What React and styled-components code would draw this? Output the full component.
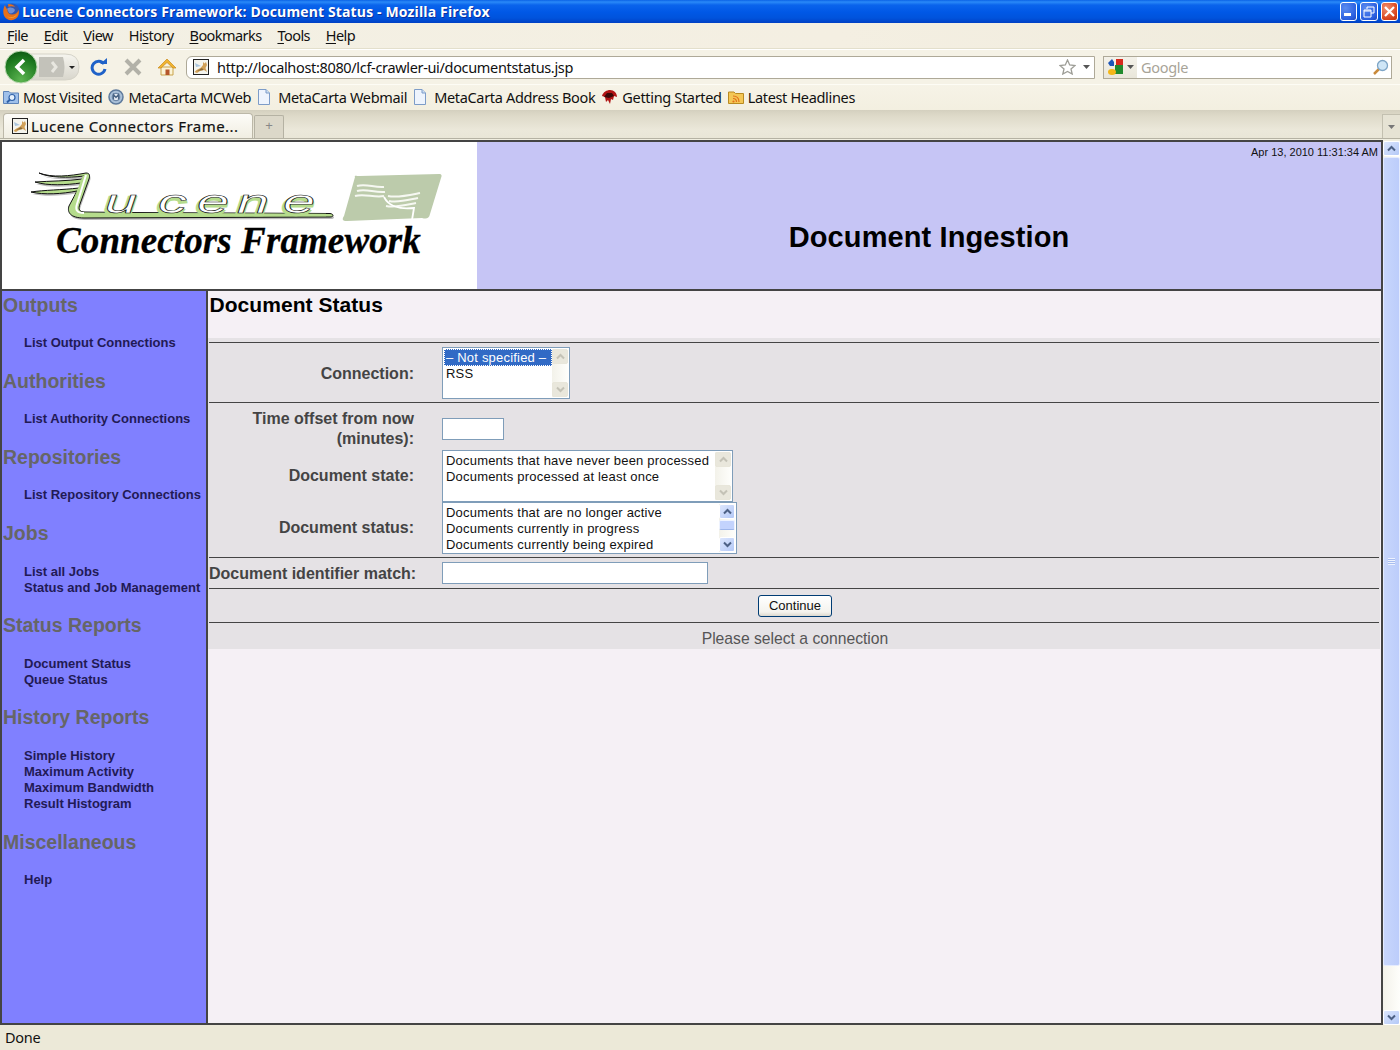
import React from "react";
import styled, { createGlobalStyle } from "styled-components";

const GlobalStyle = createGlobalStyle`
  html, body {
    margin: 0;
    padding: 0;
    height: 1050px;
    overflow: hidden;
    background: #ece9d8;
    font-family: "Liberation Sans", Arial, sans-serif;
  }
`;

const Window = styled.div`
  width: 1400px;
  height: 1050px;
  display: flex;
  flex-direction: column;
  overflow: hidden;
`;

// Browser chrome
const TitleBar = styled.div`
  height: 23px;
  flex: none;
  display: flex;
  align-items: center;
  padding: 0 2px 0 2px;
  background: linear-gradient(#0b63e6 0, #2a8af8 2px, #0a64ec 5px, #0058e6 12px, #0053dc 18px, #0040c4 23px);
`;

const TitleText = styled.div`
  flex: 1;
  margin-left: 2px;
  color: #fff;
  font: bold 14px "Open Sans", sans-serif;
  letter-spacing: 0.13px;
  text-shadow: 1px 1px 0 #0a2f9c;
  white-space: nowrap;
`;

const WinButtons = styled.div`
  display: flex;
  gap: 3px;
`;

const WinButton = styled.div`
  width: 15.5px;
  height: 17px;
  border: 1px solid #fff;
  border-radius: 3px;
  background: ${(p) =>
    p.$close
      ? "radial-gradient(circle at 30% 30%, #f09070, #d8431c 70%, #b83210)"
      : "radial-gradient(circle at 30% 30%, #5a8cf0, #2a5fe0 70%, #1c46c0)"};
  display: flex;
  align-items: center;
  justify-content: center;
`;

const MenuBar = styled.div`
  height: 26px;
  flex: none;
  display: flex;
  align-items: center;
  gap: 15.8px;
  padding: 0 7px 1px;
  box-sizing: border-box;
  background: linear-gradient(90deg, #f3f0e4, #f4efe2 60%, #efebdc);
  border-bottom: 1px solid #e3dfcc;
  font: 14.5px "Noto Sans", sans-serif;
  letter-spacing: -0.55px;
  color: #111;
`;

const MenuItem = styled.span`
  & u {
    text-underline-offset: 2px;
  }
`;

const NavBar = styled.div`
  height: 36px;
  flex: none;
  display: flex;
  align-items: center;
  box-sizing: border-box;
  padding-left: 3px;
  background: #f5f2e6;
  border-top: 1px solid #fff;
  border-bottom: 1px solid #fdfcf5;
`;

const BackForward = styled.div`
  position: relative;
  width: 78px;
  height: 30px;
  margin-right: 9px;
`;

const UrlBar = styled.div`
  width: 909px;
  height: 23px;
  margin-left: 9px;
  box-sizing: border-box;
  display: flex;
  align-items: center;
  background: #fff;
  border: 1px solid #aea998;
  border-radius: 6px 0 0 6px;
  padding: 0 4px 0 6px;
`;

const SiteIcon = styled.span`
  width: 16px;
  height: 16px;
  flex: none;
  display: flex;
`;

const UrlText = styled.div`
  flex: 1;
  margin-left: 8px;
  font: 14.5px "Noto Sans", sans-serif;
  letter-spacing: -0.335px;
  color: #111;
  white-space: nowrap;
`;

const SearchBar = styled.div`
  width: 289px;
  height: 23px;
  margin-left: 8px;
  box-sizing: border-box;
  display: flex;
  align-items: center;
  background: #fff;
  border: 1px solid #aea998;
  padding-right: 2px;
`;

const EngineBox = styled.div`
  width: 33px;
  height: 21px;
  flex: none;
  display: flex;
  align-items: center;
  padding-left: 3px;
  box-sizing: border-box;
  gap: 2px;
  background: linear-gradient(#f4f2ea, #e9e6da);
`;

const SearchHint = styled.div`
  flex: 1;
  margin-left: 4px;
  font: 14.5px "Noto Sans", sans-serif;
  letter-spacing: -0.3px;
  color: #a8a498;
`;

const Bookmarks = styled.div`
  height: 25px;
  flex: none;
  box-sizing: border-box;
  display: flex;
  align-items: center;
  padding: 0 0 2px 3px;
  gap: 6px;
  background: linear-gradient(#f6f3e7, #f3efe0);
  font: 14.5px "Noto Sans", sans-serif;
  letter-spacing: -0.33px;
  color: #111;
`;

const Bookmark = styled.div`
  display: flex;
  align-items: center;
  gap: 4px;
  white-space: nowrap;
`;

const TabStrip = styled.div`
  height: 29px;
  flex: none;
  box-sizing: border-box;
  display: flex;
  align-items: flex-end;
  padding-left: 3px;
  background: linear-gradient(#d4d0bf, #dedac9 6px, #ebe8da 20px, #e9e6d7);
  border-bottom: 1px solid #b5b2a3;
`;

const Tab = styled.div`
  width: 250px;
  height: 25px;
  box-sizing: border-box;
  display: flex;
  align-items: center;
  gap: 3px;
  padding-left: 8px;
  background: linear-gradient(#fdfcf8, #f1eee2);
  border: 1px solid #bcb8a8;
  border-bottom: 0;
  border-radius: 4px 4px 0 0;
  font: 15px "Noto Sans", sans-serif;
  letter-spacing: 0.46px;
  -webkit-text-stroke: 0.2px #111;
  color: #111;
  white-space: nowrap;
`;

const NewTab = styled.div`
  width: 30px;
  height: 23px;
  margin-left: 1px;
  box-sizing: border-box;
  background: #dcd8c9;
  border: 1px solid #b5b2a3;
  border-bottom: 0;
  border-radius: 2px 2px 0 0;
  color: #888;
  font-size: 13px;
  text-align: center;
  line-height: 20px;
`;

const TabMenu = styled.div`
  width: 18px;
  height: 24px;
  margin-left: auto;
  box-sizing: border-box;
  background: #e6e3d4;
  border: 1px solid #c3c0b0;
  border-right: 0;
  border-bottom: 0;
  display: flex;
  align-items: center;
  justify-content: center;
`;

// Page
const Viewport = styled.div`
  flex: 1;
  min-height: 0;
  display: flex;
  background: #f0eee0;
`;

const Page = styled.div`
  flex: 1;
  display: flex;
  flex-direction: column;
  border: 2px solid #444;
  margin-top: 1px;
`;

const Header = styled.div`
  height: 147px;
  flex: none;
  display: flex;
  background: #c6c5f5;
  border-bottom: 2px solid #444;
`;

const LogoBox = styled.div`
  width: 475px;
  flex: none;
  background: #fff;
  display: flex;
  flex-direction: column;
  align-items: flex-start;
`;

const LogoTagline = styled.div`
  margin: -15px 0 0 54px;
  font: italic bold 37px "Liberation Serif", serif;
  letter-spacing: 0.1px;
  -webkit-text-stroke: 0.3px #000;
  color: #000;
  white-space: nowrap;
`;

const Banner = styled.div`
  flex: 1;
  display: flex;
  flex-direction: column;
`;

const DateStamp = styled.div`
  margin: 4px 3px 0 0;
  text-align: right;
  font-size: 11px;
  line-height: 13px;
  color: #111;
`;

const BannerTitle = styled.div`
  margin-top: 60px;
  text-align: center;
  font-size: 29px;
  font-weight: bold;
  line-height: 36px;
  letter-spacing: 0.1px;
  color: #000;
`;

const Body = styled.div`
  flex: 1;
  min-height: 0;
  display: flex;
`;

const Sidebar = styled.div`
  width: 204px;
  flex: none;
  padding-top: 1.5px;
  background: #8080ff;
  border-right: 2px solid #444;
  overflow: hidden;
`;

const NavSection = styled.div`
  margin-bottom: 17.7px;
`;

const NavHeading = styled.div`
  padding-left: 1px;
  font-size: 19.5px;
  font-weight: bold;
  line-height: 24px;
  color: #666;
`;

const NavList = styled.div`
  margin: 18.5px 0 0 22px;
`;

const NavLink = styled.div`
  font-size: 13px;
  font-weight: bold;
  line-height: 16px;
  color: #221a55;
  white-space: nowrap;
`;

const Main = styled.div`
  flex: 1;
  min-width: 0;
  background: #f5f0f5;
`;

const PageTitle = styled.div`
  height: 47px;
  box-sizing: border-box;
  padding: 1px 0 0 1.5px;
  font-size: 21px;
  font-weight: bold;
  line-height: 25px;
  letter-spacing: 0.05px;
  color: #000;
`;

const FormPanel = styled.div`
  width: 1172px;
  padding: 4px 1px 0;
  box-sizing: border-box;
  background: #e5e2e5;
`;

const Rule = styled.div`
  height: 1px;
  background: #444;
`;

const Row = styled.div`
  display: flex;
  align-items: ${(p) => (p.$top ? "flex-start" : "center")};
  height: ${(p) => p.$h}px;
`;

const Label = styled.div`
  width: 205px;
  flex: none;
  box-sizing: border-box;
  padding-top: ${(p) => (p.$pad === undefined ? 2 : p.$pad)}px;
  text-align: right;
  font-size: 16px;
  font-weight: bold;
  line-height: 20px;
  color: #444;
  white-space: ${(p) => (p.$wrap ? "normal" : "nowrap")};
`;

const Field = styled.div`
  margin-left: 28px;
  margin-top: ${(p) => p.$top || 0}px;
  display: flex;
`;

const TextInput = styled.div`
  width: ${(p) => p.$w}px;
  height: 22px;
  box-sizing: border-box;
  background: #fff;
  border: 1px solid #7f9db9;
`;

const ListBox = styled.div`
  width: ${(p) => p.$w}px;
  height: 52px;
  box-sizing: border-box;
  display: flex;
  background: #fff;
  border: 1px solid #7f9db9;
  padding: 1px;
  font-size: 13px;
  line-height: 16px;
  letter-spacing: 0.2px;
  color: #111;
`;

const Options = styled.div`
  flex: 1;
  min-width: 0;
  padding-top: 1px;
`;

const Option = styled.div`
  padding-left: 2px;
  white-space: nowrap;
  ${(p) =>
    p.$selected &&
    `
    margin-top: -1px;
    padding-top: 1px;
    background: #316ac5;
    color: #fff;
    outline: 1px dotted #fff;
    outline-offset: -1px;
  `}
`;

const ListScroll = styled.div`
  width: 16px;
  flex: none;
  display: flex;
  flex-direction: column;
  justify-content: space-between;
  background: linear-gradient(90deg, #f3f2ea, #fefefb);
`;

const ScrollBtn = styled.div`
  width: ${(p) => (p.$wide ? 17 : 16)}px;
  height: 15px;
  box-sizing: border-box;
  display: flex;
  align-items: center;
  justify-content: center;
  border: 1px solid ${(p) => (p.$off ? "#e8e6da" : "#fff")};
  border-radius: 2px;
  background: ${(p) => (p.$off ? "#e9e7dc" : "linear-gradient(135deg, #dce6fd, #b4c9f7)")};
`;

const ListThumb = styled.div`
  height: 10px;
  margin-top: 1px;
  flex: none;
  box-sizing: border-box;
  background: #c3d3fd;
  border: 1px solid #eef3ff;
  border-bottom-color: #9db5ea;
  border-radius: 2px;
`;

const CenterRow = styled.div`
  display: flex;
  justify-content: center;
  align-items: center;
  box-sizing: border-box;
  padding: ${(p) => p.$pad || 0}px 0 0 2px;
  height: ${(p) => p.$h}px;
`;

const ContinueBtn = styled.div`
  width: 74px;
  height: 22px;
  box-sizing: border-box;
  border: 1px solid #003c74;
  border-radius: 3px;
  background: linear-gradient(#fff, #f4f3ee 80%, #dcd8ce);
  font-size: 13px;
  line-height: 20px;
  text-align: center;
  color: #111;
`;

const Message = styled.div`
  font-size: 15.7px;
  color: #555;
`;

const PageScroll = styled.div`
  width: 17px;
  flex: none;
  display: flex;
  flex-direction: column;
  margin-top: 2px;
  background: linear-gradient(90deg, #f3f2ea, #fefefb);
`;

const PageThumb = styled.div`
  height: 809px;
  margin-top: 1px;
  box-sizing: border-box;
  background: linear-gradient(90deg, #c8d6fc, #bccdfb);
  border: 1px solid #e4ebfe;
  border-radius: 2px;
  display: flex;
  align-items: center;
  justify-content: center;
`;

const Grip = styled.div`
  width: 7px;
  height: 7px;
  background: repeating-linear-gradient(#eef2fe 0 1px, #a8bdf0 1px 2px);
`;

const ScrollSpacer = styled.div`
  flex: 1;
`;

const StatusBar = styled.div`
  height: 25px;
  flex: none;
  box-sizing: border-box;
  padding: 2px 0 0 5px;
  background: #ece9d8;
  font: 14.5px "Noto Sans", sans-serif;
  letter-spacing: -0.3px;
  color: #111;
`;

const PanelGap = styled.div`
  height: 3px;
`;

const Chevron = ({ up, color = "#4d6185", w = 9 }) => (
  <svg width={w} height="7" viewBox="0 0 9 7">
    <path d={up ? "M1 5.5 L4.5 2 L8 5.5" : "M1 1.5 L4.5 5 L8 1.5"} fill="none" stroke={color} strokeWidth="2" />
  </svg>
);

const Firefox = () => (
  <svg width="18" height="18" viewBox="0 0 18 18">
    <circle cx="10" cy="8" r="7.5" fill="#2f56b0" />
    <path d="M5 6 C7 4 11 4 13 7 C12 10 9 11 7 10Z" fill="#6d8fd8" />
    <path d="M3 2 C0 7 1 14 5 16 C9 18.500 15 17 16.500 12 C17 10 17 8 16.500 7 C15.500 10 13 11.500 10 11.500 C7 11.500 5 9 5.500 6.500 C4.500 5.500 3.500 4 3 2Z" fill="#e8701a" />
    <path d="M4 12 C7 16 13 15 16 10 C14 15 8 17 4 12Z" fill="#fbc33a" />
    <path d="M6 1 C9 1 12 2 13 4 C11 3 8 3 6.500 4Z" fill="#e8701a" />
  </svg>
);

const Tomcat = ({ s = 16 }) => (
  <svg width={s} height={s} viewBox="0 0 16 16" style={{ flex: "none" }}>
    <rect x="0.500" y="0.500" width="15" height="15" fill="#f4f4ee" stroke="#222" />
    <path d="M1.500 13 C4 10 6 10 8 8.500 L10 6 L10 3 L11.500 4.500 L13 3 L14 6 L12.500 9 L14 13 L11 11 L7 12 L4 14Z" fill="#d1a159" />
    <path d="M4 12 L9 9 L10.500 11Z" fill="#8a6a3a" />
    <path d="M2 4 L8 7 L3 8Z" fill="#a9c4dd" />
  </svg>
);

const PageDoc = () => (
  <svg width="17" height="16" viewBox="0 0 17 16">
    <path d="M1.500 .5 H9 L12.500 4 V15.500 H1.500Z" fill="#eef4fd" stroke="#7d9cc8" />
    <path d="M9 .5 V4 H12.500" fill="#cfe0f5" stroke="#7d9cc8" />
  </svg>
);

const FolderSearch = () => (
  <svg width="16" height="16" viewBox="0 0 16 16">
    <path d="M.5 2.500 H6 L7.500 4 H15.500 V14.500 H.5Z" fill="#9fc0ea" stroke="#5d83b8" />
    <circle cx="9" cy="8.500" r="3" fill="#e6f1fc" stroke="#2f61a8" strokeWidth="1.200" />
    <path d="M7 10.500 L4 13.500" stroke="#2f61a8" strokeWidth="2" />
  </svg>
);

const GlobeIcon = () => (
  <svg width="16" height="16" viewBox="0 0 16 16">
    <circle cx="8" cy="8" r="7" fill="#a9c0d8" stroke="#5e7a9c" strokeWidth="1.500" />
    <circle cx="8" cy="8" r="3.800" fill="#e8eef5" stroke="#5e7a9c" />
    <path d="M5.500 10.500 V5.500 L8 8.500 L10.500 5.500 V10.500" fill="none" stroke="#4c6686" strokeWidth="1.200" />
  </svg>
);

const RedHat = () => (
  <svg width="17" height="16" viewBox="0 0 17 16">
    <path d="M1 7 C2 3 6 1 9 1 C13 1 16 4 16 8 L13 7 L12 11 L10 10 L9 15 L7 11 L5 13 L4 8 Z" fill="#b01414" />
    <path d="M3 8 L6 4 L11 4 L13 7 L8 9Z" fill="#3a0808" />
  </svg>
);

const RssIcon = () => (
  <svg width="16" height="16" viewBox="0 0 16 16">
    <path d="M.5 3 H6 L7.500 4.500 H15.500 V14.500 H.5Z" fill="#f4c755" stroke="#b98a20" />
    <path d="M5 7 C9 7 11 9 11 13 M5 9.500 C7.500 9.500 8.500 10.500 8.500 13" fill="none" stroke="#e2701a" strokeWidth="1.200" />
    <circle cx="5.500" cy="12.500" r="1.100" fill="#e2701a" />
  </svg>
);

const GoogleG = () => (
  <svg width="18" height="18" viewBox="0 0 18 18">
    <rect x="9" y="1" width="7" height="7" fill="#d62a1c" />
    <rect x="8" y="7" width="8" height="9" fill="#1f8a2c" />
    <path d="M1 5 L5 1 L7 4 L7 8 L3 8Z" fill="#1c55b8" />
    <ellipse cx="5" cy="14" rx="4" ry="3" fill="#f3b617" />
  </svg>
);

const Caret = ({ color = "#555" }) => (
  <svg width="7" height="4" viewBox="0 0 7 4" style={{ flex: "none" }}>
    <path d="M0 0 H7 L3.500 4Z" fill={color} />
  </svg>
);

const BackButtons = () => (
  <svg width="78" height="34" viewBox="0 0 78 34" style={{ position: "absolute", left: 0, top: -2 }}>
    <defs>
      <linearGradient id="bf" x1="0" x2="0" y1="0" y2="1">
        <stop offset="0" stopColor="#f6f5ef" />
        <stop offset="1" stopColor="#d8d6cc" />
      </linearGradient>
      <radialGradient id="grn" cx="0.5" cy="0.9" r="0.9">
        <stop offset="0" stopColor="#5cb451" />
        <stop offset="0.7" stopColor="#1d7a1f" />
        <stop offset="1" stopColor="#0e5a13" />
      </radialGradient>
    </defs>
    <path d="M18 4 H62 Q76 4 76 17 Q76 30 62 30 H18Z" fill="url(#bf)" stroke="#d5d3c8" />
    <path d="M36 7 H60 Q63 17 60 27 H36Z" fill="#c3c2ba" />
    <path d="M49 12 L53 17 L49 22" fill="none" stroke="#e8e7e0" strokeWidth="3" />
    <circle cx="18" cy="17" r="16" fill="url(#grn)" stroke="#b9d8b0" />
    <path d="M21 10 L14 17 L21 24" fill="none" stroke="#fff" strokeWidth="3.500" />
    <path d="M66 16 H72 L69 19Z" fill="#222" />
  </svg>
);

const Reload = () => (
  <svg width="18" height="18" viewBox="0 0 18 18" style={{ flex: "none" }}>
    <path d="M14 6 A6.500 6.500 0 1 0 15 11" fill="none" stroke="#1f62c8" strokeWidth="3" />
    <path d="M10 6 H17 V0Z" fill="#1f62c8" />
  </svg>
);

const StopX = () => (
  <svg width="18" height="18" viewBox="0 0 18 18" style={{ flex: "none", marginLeft: 16 }}>
    <path d="M2 2 L16 16 M16 2 L2 16" stroke="#b2b1a8" strokeWidth="4" />
  </svg>
);

const Home = () => (
  <svg width="20" height="18" viewBox="0 0 20 18" style={{ flex: "none", marginLeft: 15 }}>
    <path d="M4 9 H16 V17 H4Z" fill="#fbf3d6" stroke="#c9a24a" />
    <path d="M1 10 L10 1 L19 10 L16 10 L10 4.500 L4 10Z" fill="#f0b430" stroke="#c98a1c" strokeWidth=".7" />
    <rect x="8.500" y="11.500" width="4" height="5.500" fill="#b5562a" />
  </svg>
);

const Star = () => (
  <svg width="17" height="16" viewBox="0 0 17 16" style={{ flex: "none", marginRight: 7 }}>
    <path d="M8.500 1 L10.700 6 L16 6.500 L12 10 L13.200 15 L8.500 12.500 L3.800 15 L5 10 L1 6.500 L6.300 6Z" fill="#fff" stroke="#9d9d96" strokeWidth="1.300" />
  </svg>
);

const Magnifier = () => (
  <svg width="17" height="17" viewBox="0 0 17 17" style={{ flex: "none" }}>
    <path d="M7 10 L2 15" stroke="#c98a3c" strokeWidth="2.500" />
    <circle cx="10.500" cy="6.500" r="5" fill="#cfe6f7" stroke="#7ea5c6" strokeWidth="1.300" />
  </svg>
);

const LuceneLogo = () => (
  <svg width="475" height="92" viewBox="2 142 475 92" style={{ display: "block", flex: "none" }}>
    <defs>
      <path
        id="lucene-mark"
        d="M39 173 C52 178 70 176 86 173 C90 173 90 176 89 179 L80 204 C78 209 79 212 85 212 L125 212.500 L330 213.500 C334 214 334 217 330 217 L84 218 C70 218 67 212 69 206 L77 191 C62 194 44 195 31 192 C44 190 62 190 79 188 L81 183 C66 185 48 186 35 182 C50 181 68 181 82 179 L84 176 C68 178 50 178 39 173Z"
      />
    </defs>
    <use href="#lucene-mark" transform="translate(1 2)" fill="#bbb" />
    <use href="#lucene-mark" fill="#b5dc8c" stroke="#111" strokeWidth="1" />
    <path d="M84 176 L72 207 C71 212 75 214 84 214 L326 215" fill="none" stroke="#b5dc8c" strokeWidth="2.500" />
    <path d="M86 175 L77 204 C75 210 77 213 84 213" fill="none" stroke="#fff" strokeWidth="2" />
    <g fontFamily="'Liberation Sans', sans-serif" fontStyle="italic" fontSize="34" transform="scale(1.7 1)">
      <text x="61.200 92.300 115.300 138.800 165.900" y="215" fill="none" stroke="#b5dc8c" strokeWidth="3.500" vectorEffect="non-scaling-stroke">ucene</text>
      <text x="61.800 92.900 115.900 139.400 166.500" y="213" fill="#fff" stroke="#111" strokeWidth="0.800" vectorEffect="non-scaling-stroke">ucene</text>
    </g>
    <path d="M355 177 C354 175 356 176 360 176 L439 174 C442 174 442 176 441 178 L430 214 C429 219 426 219 422 218 L347 221 C342 221 342 219 344 216Z" fill="#bccbab" />
    <path d="M357 186 C366 183 374 188 384 187 M357 191 C366 188 374 193 385 192 M355 196 C364 193 374 198 384 196" stroke="#f6f8f2" strokeWidth="2" fill="none" />
    <path d="M388 196 C398 198 410 195 420 193 M389 201 C398 203 408 200 418 198 M386 206 C396 208 406 205 416 203" stroke="#f6f8f2" strokeWidth="2" fill="none" />
    <path d="M384 197 C388 205 398 210 414 208 L412 220" stroke="#fff" strokeWidth="1.800" fill="none" />
  </svg>
);

const menus = [
  ["", "F", "ile"],
  ["", "E", "dit"],
  ["", "V", "iew"],
  ["Hi", "s", "tory"],
  ["", "B", "ookmarks"],
  ["", "T", "ools"],
  ["", "H", "elp"],
];

const navSections = [
  { title: "Outputs", links: ["List Output Connections"] },
  { title: "Authorities", links: ["List Authority Connections"] },
  { title: "Repositories", links: ["List Repository Connections"] },
  { title: "Jobs", links: ["List all Jobs", "Status and Job Management"] },
  { title: "Status Reports", links: ["Document Status", "Queue Status"] },
  { title: "History Reports", links: ["Simple History", "Maximum Activity", "Maximum Bandwidth", "Result Histogram"] },
  { title: "Miscellaneous", links: ["Help"] },
];

const DisabledScroll = () => (
  <ListScroll>
    <ScrollBtn $off>
      <Chevron up color="#c4c2b6" />
    </ScrollBtn>
    <ScrollBtn $off>
      <Chevron color="#c4c2b6" />
    </ScrollBtn>
  </ListScroll>
);

const App = () => (
  <Window>
    <GlobalStyle />
    <TitleBar>
      <Firefox />
      <TitleText>Lucene Connectors Framework: Document Status - Mozilla Firefox</TitleText>
      <WinButtons>
        <WinButton>
          <svg width="11" height="11" viewBox="0 0 11 11">
            <rect x="1" y="7" width="7" height="3" fill="#fff" />
          </svg>
        </WinButton>
        <WinButton>
          <svg width="12" height="12" viewBox="0 0 12 12">
            <path d="M4 3 V1 H11 V7 H8 M1 4 H8 V11 H1Z M1 5 H8" fill="none" stroke="#fff" />
          </svg>
        </WinButton>
        <WinButton $close>
          <svg width="11" height="11" viewBox="0 0 11 11">
            <path d="M1 1 L10 10 M10 1 L1 10" stroke="#fff" strokeWidth="2.200" />
          </svg>
        </WinButton>
      </WinButtons>
    </TitleBar>

    <MenuBar>
      {menus.map(([before, key, after]) => (
        <MenuItem key={key}>
          {before}
          <u>{key}</u>
          {after}
        </MenuItem>
      ))}
    </MenuBar>

    <NavBar>
      <BackForward>
        <BackButtons />
      </BackForward>
      <Reload />
      <StopX />
      <Home />
      <UrlBar>
        <SiteIcon>
          <Tomcat />
        </SiteIcon>
        <UrlText>http://localhost:8080/lcf-crawler-ui/documentstatus.jsp</UrlText>
        <Star />
        <Caret />
      </UrlBar>
      <SearchBar>
        <EngineBox>
          <GoogleG />
          <Caret />
        </EngineBox>
        <SearchHint>Google</SearchHint>
        <Magnifier />
      </SearchBar>
    </NavBar>

    <Bookmarks>
      <Bookmark>
        <FolderSearch />
        Most Visited
      </Bookmark>
      <Bookmark>
        <GlobeIcon />
        MetaCarta MCWeb
      </Bookmark>
      <Bookmark>
        <PageDoc />
        MetaCarta Webmail
      </Bookmark>
      <Bookmark>
        <PageDoc />
        MetaCarta Address Book
      </Bookmark>
      <Bookmark>
        <RedHat />
        Getting Started
      </Bookmark>
      <Bookmark>
        <RssIcon />
        Latest Headlines
      </Bookmark>
    </Bookmarks>

    <TabStrip>
      <Tab>
        <Tomcat />
        Lucene Connectors Frame...
      </Tab>
      <NewTab>+</NewTab>
      <TabMenu>
        <Caret color="#777" />
      </TabMenu>
    </TabStrip>

    <Viewport>
      <Page>
        <Header>
          <LogoBox>
            <LuceneLogo />
            <LogoTagline>Connectors Framework</LogoTagline>
          </LogoBox>
          <Banner>
            <DateStamp>Apr 13, 2010 11:31:34 AM</DateStamp>
            <BannerTitle>Document Ingestion</BannerTitle>
          </Banner>
        </Header>
        <Body>
          <Sidebar>
            {navSections.map((section) => (
              <NavSection key={section.title}>
                <NavHeading>{section.title}</NavHeading>
                <NavList>
                  {section.links.map((link) => (
                    <NavLink key={link}>{link}</NavLink>
                  ))}
                </NavList>
              </NavSection>
            ))}
          </Sidebar>
          <Main>
            <PageTitle>Document Status</PageTitle>
            <FormPanel>
              <Rule />
              <Row $h={59}>
                <Label>Connection:</Label>
                <Field>
                  <ListBox $w={128}>
                    <Options>
                      <Option $selected>– Not specified –</Option>
                      <Option>RSS</Option>
                    </Options>
                    <DisabledScroll />
                  </ListBox>
                </Field>
              </Row>
              <Rule />
              <Row $h={47} $top>
                <Label $wrap $pad={6}>Time offset from now (minutes):</Label>
                <Field $top={15}>
                  <TextInput $w={62} />
                </Field>
              </Row>
              <Row $h={52}>
                <Label $pad={0}>Document state:</Label>
                <Field>
                  <ListBox $w={291}>
                    <Options>
                      <Option>Documents that have never been processed</Option>
                      <Option>Documents processed at least once</Option>
                    </Options>
                    <DisabledScroll />
                  </ListBox>
                </Field>
              </Row>
              <Row $h={52}>
                <Label $pad={0}>Document status:</Label>
                <Field>
                  <ListBox $w={295}>
                    <Options>
                      <Option>Documents that are no longer active</Option>
                      <Option>Documents currently in progress</Option>
                      <Option>Documents currently being expired</Option>
                    </Options>
                    <ListScroll>
                      <ScrollBtn>
                        <Chevron up />
                      </ScrollBtn>
                      <ListThumb />
                      <ScrollSpacer />
                      <ScrollBtn>
                        <Chevron />
                      </ScrollBtn>
                    </ListScroll>
                  </ListBox>
                </Field>
              </Row>
              <PanelGap />
              <Rule />
              <Row $h={30}>
                <Label>Document identifier match:</Label>
                <Field>
                  <TextInput $w={266} />
                </Field>
              </Row>
              <Rule />
              <CenterRow $h={33}>
                <ContinueBtn>Continue</ContinueBtn>
              </CenterRow>
              <Rule />
              <CenterRow $h={26} $pad={5}>
                <Message>Please select a connection</Message>
              </CenterRow>
            </FormPanel>
          </Main>
        </Body>
      </Page>
      <PageScroll>
        <ScrollBtn $wide>
          <Chevron up />
        </ScrollBtn>
        <PageThumb>
          <Grip />
        </PageThumb>
        <ScrollSpacer />
        <ScrollBtn $wide>
          <Chevron />
        </ScrollBtn>
      </PageScroll>
    </Viewport>

    <StatusBar>Done</StatusBar>
  </Window>
);

export default App;
